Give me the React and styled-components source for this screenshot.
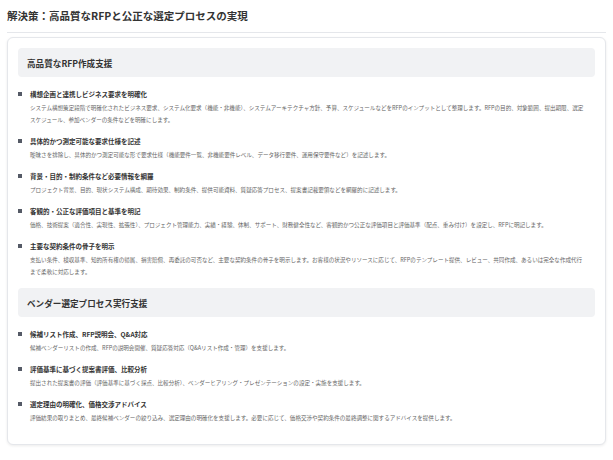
import React from "react";
import styled, { createGlobalStyle } from "styled-components";

const Global = createGlobalStyle`
  body {
    margin: 0;
    background: #fff;
    font-family: "Noto Sans CJK JP", "Noto Sans", sans-serif;
  }
`;

const Page = styled.div`
  padding: 8px 7px 12px;
`;

const Title = styled.h1`
  font-size: 10.5px;
  font-weight: 700;
  color: #333;
  margin: 0;
  padding-bottom: 9px;
  border-bottom: 1px solid #e5e7eb;
`;

const Card = styled.div`
  margin-top: 4px;
  background: #fff;
  border: 1px solid #e5e7eb;
  border-radius: 6px;
  box-shadow: 0 1px 3px rgba(0, 0, 0, 0.08);
  padding: 10px 10px 20px;
`;

const SectionHeader = styled.h2`
  background: #f1f2f4;
  border-radius: 4px;
  margin: ${(p) => (p.$first ? "0" : "10px")} 0 12px;
  height: 29px;
  display: flex;
  align-items: center;
  padding: 0 9px;
  font-size: 8.6px;
  font-weight: 700;
  color: #333;
`;

const List = styled.ul`
  list-style: none;
  margin: 0;
  padding: 0;
  display: flex;
  flex-direction: column;
  gap: 10px;
`;

const Item = styled.li`
  display: grid;
  grid-template-columns: 12px 1fr;
`;

const Bullet = styled.span`
  width: 4px;
  height: 4px;
  background: #555a66;
  margin-top: 3px;
`;

const ItemTitle = styled.div`
  font-size: 6.5px;
  font-weight: 700;
  color: #333;
  line-height: 10px;
  margin-bottom: 3px;
`;

const ItemDesc = styled.div`
  font-size: 5.55px;
  color: #666;
  line-height: 12px;
  padding-right: 8px;
`;

const sections = [
  {
    title: "高品質なRFP作成支援",
    items: [
      ["構想企画と連携しビジネス要求を明確化", "システム構想策定段階で明確化されたビジネス要求、システム化要求（機能・非機能）、システムアーキテクチャ方針、予算、スケジュールなどをRFPのインプットとして整理します。RFPの目的、対象範囲、提出期限、選定スケジュール、参加ベンダーの条件などを明確にします。"],
      ["具体的かつ測定可能な要求仕様を記述", "曖昧さを排除し、具体的かつ測定可能な形で要求仕様（機能要件一覧、非機能要件レベル、データ移行要件、運用保守要件など）を記述します。"],
      ["背景・目的・制約条件など必要情報を網羅", "プロジェクト背景、目的、現状システム構成、期待効果、制約条件、提供可能資料、質疑応答プロセス、提案書記載要領などを網羅的に記述します。"],
      ["客観的・公正な評価項目と基準を明記", "価格、技術提案（適合性、実現性、拡張性）、プロジェクト管理能力、実績・経験、体制、サポート、財務健全性など、客観的かつ公正な評価項目と評価基準（配点、重み付け）を設定し、RFPに明記します。"],
      ["主要な契約条件の骨子を明示", "支払い条件、検収基準、知的所有権の帰属、損害賠償、再委託の可否など、主要な契約条件の骨子を明示します。お客様の状況やリソースに応じて、RFPのテンプレート提供、レビュー、共同作成、あるいは完全な作成代行まで柔軟に対応します。"],
    ],
  },
  {
    title: "ベンダー選定プロセス実行支援",
    items: [
      ["候補リスト作成、RFP説明会、Q&A対応", "候補ベンダーリストの作成、RFPの説明会開催、質疑応答対応（Q&Aリスト作成・管理）を支援します。"],
      ["評価基準に基づく提案書評価、比較分析", "提出された提案書の評価（評価基準に基づく採点、比較分析）、ベンダーヒアリング・プレゼンテーションの設定・実施を支援します。"],
      ["選定理由の明確化、価格交渉アドバイス", "評価結果の取りまとめ、最終候補ベンダーの絞り込み、選定理由の明確化を支援します。必要に応じて、価格交渉や契約条件の最終調整に関するアドバイスを提供します。"],
    ],
  },
];

export default function App() {
  return (
    <Page>
      <Global />
      <Title>解決策：高品質なRFPと公正な選定プロセスの実現</Title>
      <Card>
        {sections.map((s, i) => (
          <React.Fragment key={s.title}>
            <SectionHeader $first={i === 0}>{s.title}</SectionHeader>
            <List>
              {s.items.map(([t, d]) => (
                <Item key={t}>
                  <Bullet />
                  <div>
                    <ItemTitle>{t}</ItemTitle>
                    <ItemDesc>{d}</ItemDesc>
                  </div>
                </Item>
              ))}
            </List>
          </React.Fragment>
        ))}
      </Card>
    </Page>
  );
}
